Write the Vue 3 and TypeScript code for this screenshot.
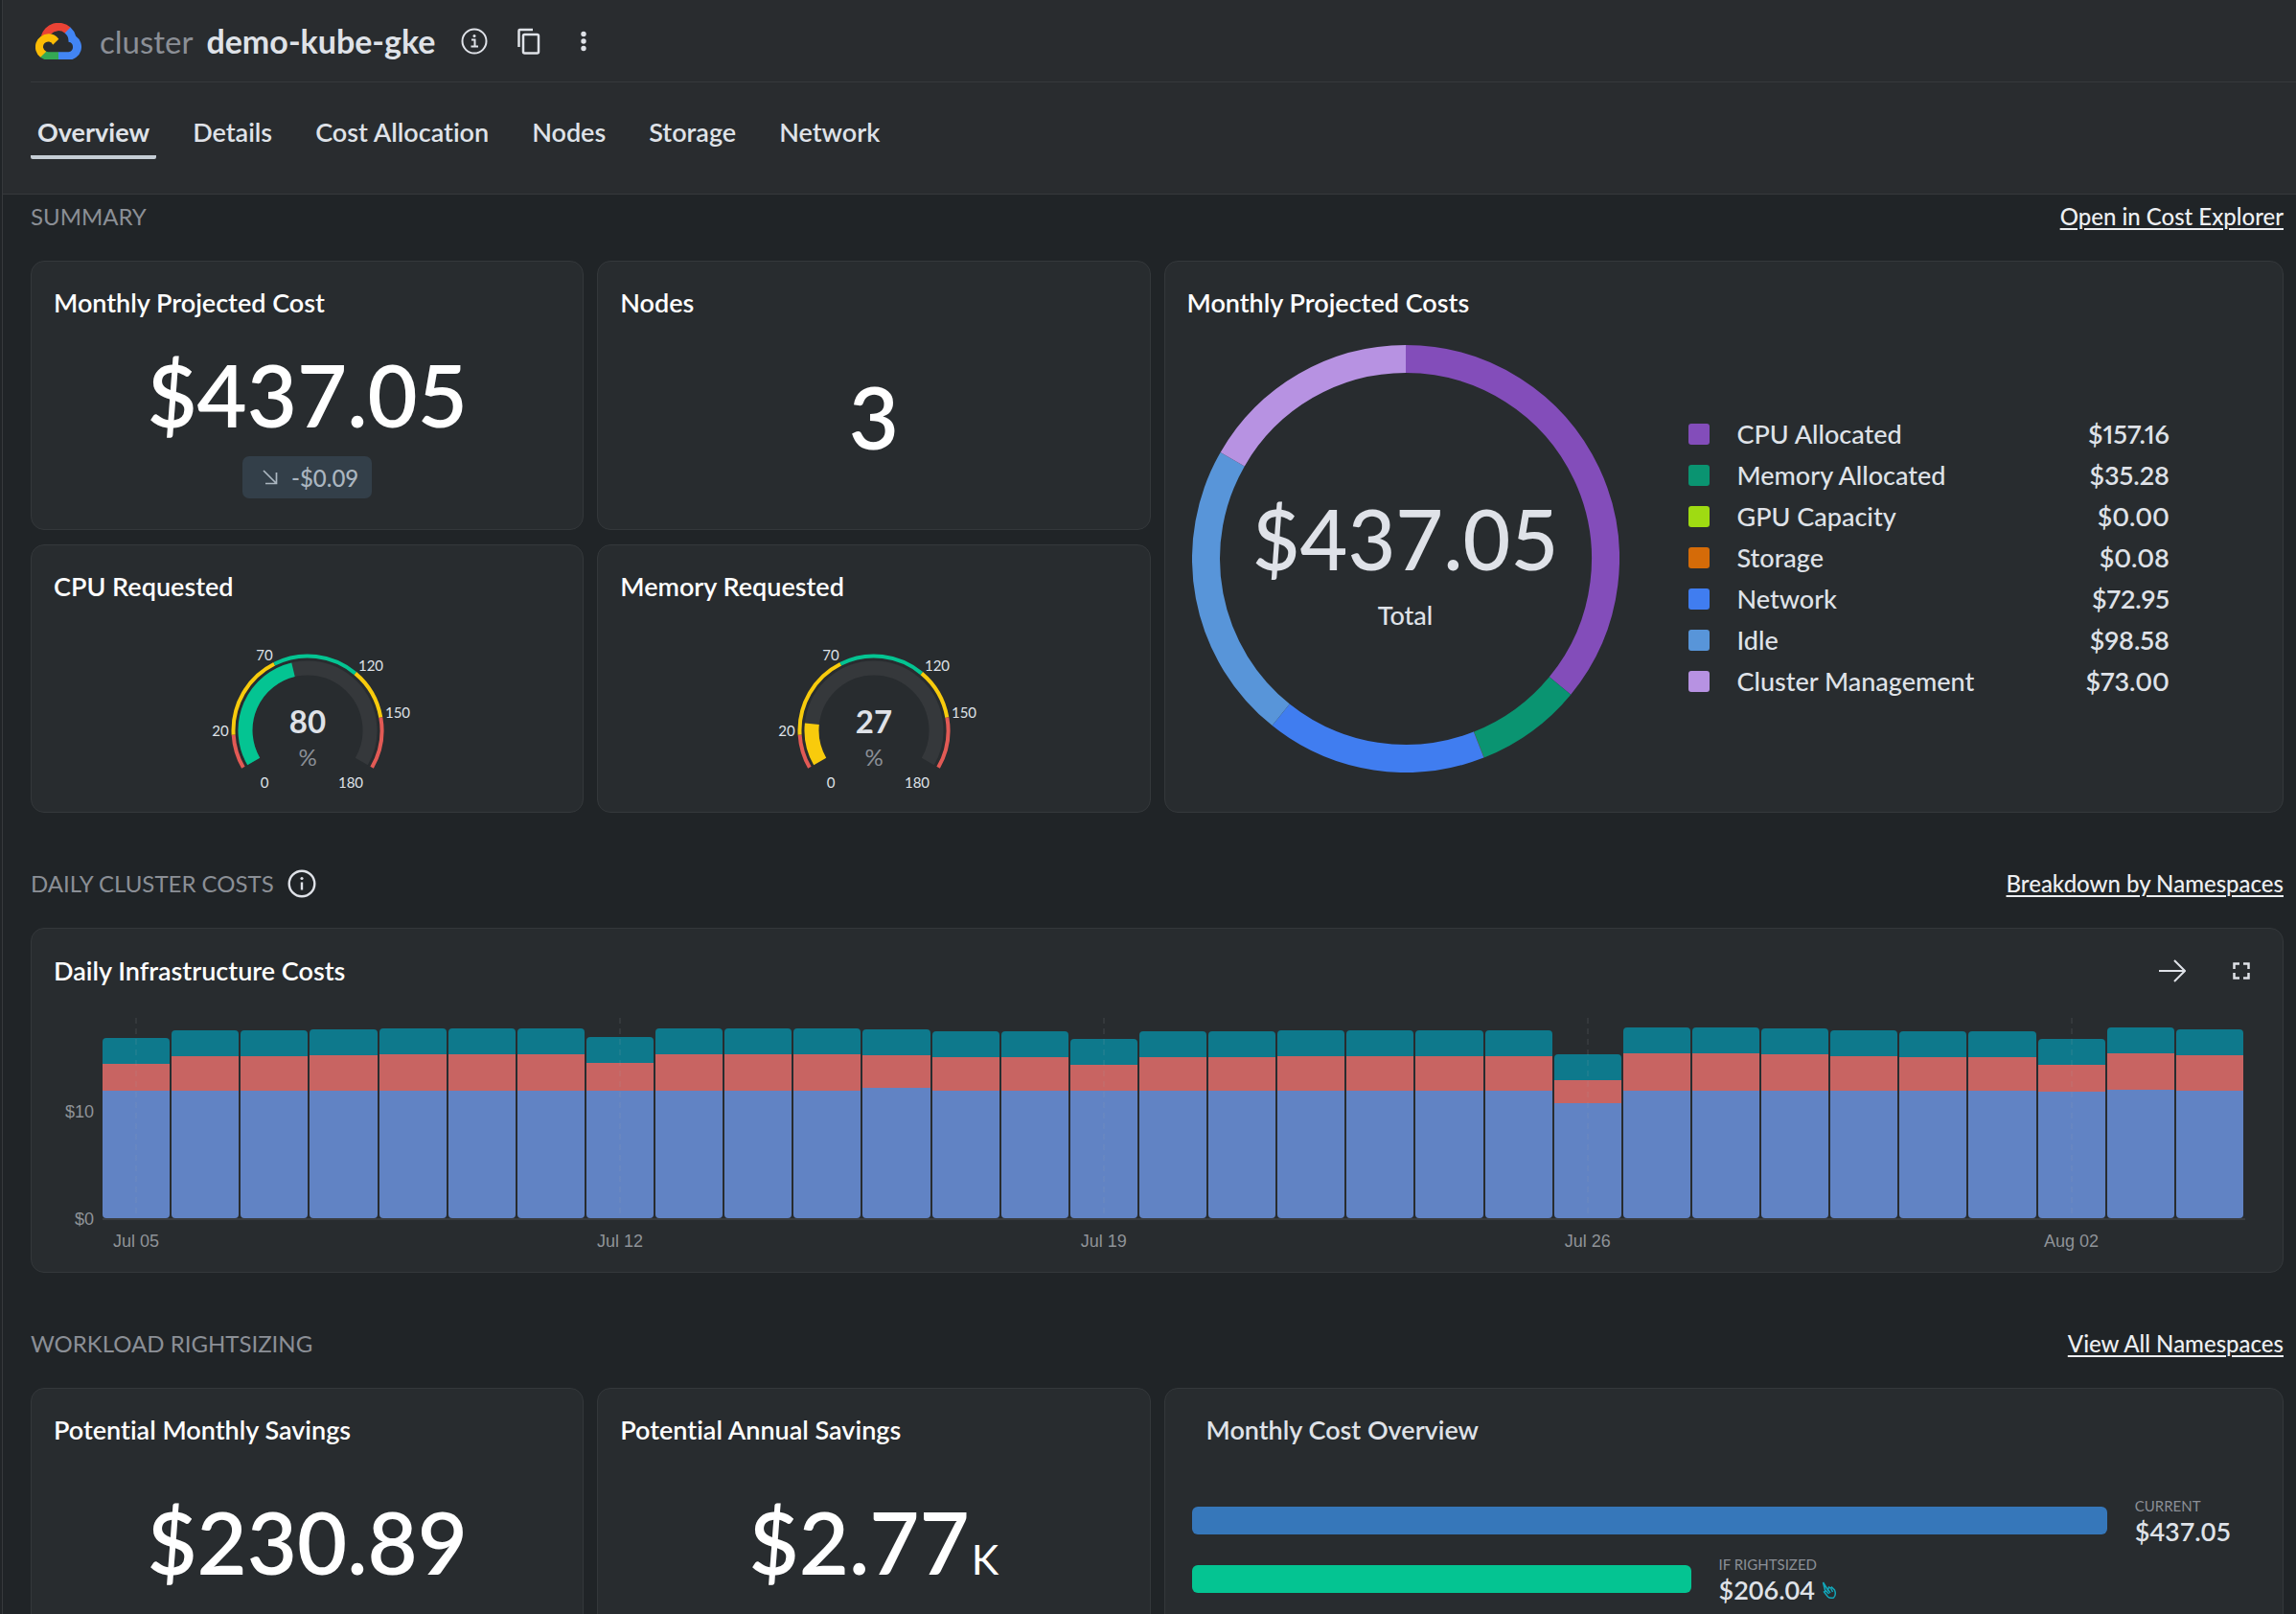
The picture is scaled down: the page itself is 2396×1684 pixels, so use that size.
<script setup lang="ts">
interface Slice {
  label: string
  value: number
  color: string
}

interface Day {
  base: number
  mid: number
  tick?: string
}

interface Gauge {
  title: string
  value: number
  color: string
}

const tabs = ['Overview', 'Details', 'Cost Allocation', 'Nodes', 'Storage', 'Network']

const slices: Slice[] = [
  { label: 'CPU Allocated', value: 157.16, color: '#834dba' },
  { label: 'Memory Allocated', value: 35.28, color: '#0a9471' },
  { label: 'GPU Capacity', value: 0, color: '#9fdb12' },
  { label: 'Storage', value: 0.08, color: '#d56b08' },
  { label: 'Network', value: 72.95, color: '#407df0' },
  { label: 'Idle', value: 98.58, color: '#5895d9' },
  { label: 'Cluster Management', value: 73, color: '#b792e2' },
]

const gauges: Gauge[] = [
  { title: 'CPU Requested', value: 80, color: '#04c492' },
  { title: 'Memory Requested', value: 27, color: '#f8cb0c' },
]

const bands = [
  { from: 0, to: 20, color: '#e25a55' },
  { from: 20, to: 70, color: '#f8cb0c' },
  { from: 70, to: 120, color: '#04c492' },
  { from: 120, to: 150, color: '#f8cb0c' },
  { from: 150, to: 180, color: '#e25a55' },
]

const gaugeLabels = [
  { text: '0', x: 65, y: 159 },
  { text: '20', x: 19, y: 105 },
  { text: '70', x: 65, y: 26 },
  { text: '120', x: 176, y: 37 },
  { text: '150', x: 204, y: 86 },
  { text: '180', x: 155, y: 159 },
]

// Segment heights of the stacked columns; the top segment is the same every day.
const TOP = 27
const days: Day[] = [
  { base: 133, mid: 28, tick: 'Jul 05' },
  { base: 133, mid: 36 },
  { base: 133, mid: 36 },
  { base: 133, mid: 37 },
  { base: 133, mid: 38 },
  { base: 133, mid: 38 },
  { base: 133, mid: 38 },
  { base: 133, mid: 29, tick: 'Jul 12' },
  { base: 133, mid: 38 },
  { base: 133, mid: 38 },
  { base: 133, mid: 38 },
  { base: 136, mid: 34 },
  { base: 133, mid: 35 },
  { base: 133, mid: 35 },
  { base: 133, mid: 27, tick: 'Jul 19' },
  { base: 133, mid: 35 },
  { base: 133, mid: 35 },
  { base: 133, mid: 36 },
  { base: 133, mid: 36 },
  { base: 133, mid: 36 },
  { base: 133, mid: 36 },
  { base: 120, mid: 24, tick: 'Jul 26' },
  { base: 133, mid: 39 },
  { base: 133, mid: 39 },
  { base: 133, mid: 38 },
  { base: 133, mid: 36 },
  { base: 133, mid: 35 },
  { base: 133, mid: 35 },
  { base: 132, mid: 28, tick: 'Aug 02' },
  { base: 134, mid: 38 },
  { base: 133, mid: 37 },
]

// Point on a circle, with the angle in degrees clockwise from the top.
function point(cx: number, cy: number, r: number, deg: number): string {
  const a = ((deg - 90) * Math.PI) / 180
  return `${(cx + r * Math.cos(a)).toFixed(2)} ${(cy + r * Math.sin(a)).toFixed(2)}`
}

function arc(cx: number, cy: number, r: number, a0: number, a1: number): string {
  const large = a1 - a0 > 180 ? 1 : 0
  return `M${point(cx, cy, r, a0)} A${r} ${r} 0 ${large} 1 ${point(cx, cy, r, a1)}`
}

const total = slices.reduce((sum, s) => sum + s.value, 0)

let turned = 0
const donut = slices
  .filter((s) => s.value > 0)
  .map((s) => {
    const start = turned
    turned += (s.value / total) * 360
    return { color: s.color, d: arc(223, 223, 208.5, start, turned) }
  })

function gaugeArc(r: number, from: number, to: number): string {
  return arc(110, 99, r, -120 + (from / 180) * 240, -120 + (to / 180) * 240)
}

function money(n: number): string {
  return `$${n.toFixed(2)}`
}
</script>

<template>
  <div class="page">
    <div class="content">
      <header class="top">
        <div class="identity">
          <svg class="logo" viewBox="0 0 48 38" aria-hidden="true">
            <path fill="#ea4335" d="M30.600 10.500h1.500l4.200-4.200.2-1.800A19 19 0 0 0 5.700 13.700c.5-.2 1-.2 1.500-.1l8.400-1.400s.4-.7.6-.7a10.500 10.500 0 0 1 14.400-1z" />
            <path fill="#4285f4" d="M42.200 13.700a18.900 18.900 0 0 0-5.700-9.200l-5.900 5.900a10.500 10.500 0 0 1 3.900 8.300v1a5.300 5.300 0 0 1 0 10.500H24l-1 1.100v6.300l1 1h10.500a13.700 13.700 0 0 0 7.700-24.900z" />
            <path fill="#34a853" d="M13.500 38.600H24v-8.400H13.500c-.8 0-1.500-.2-2.200-.5l-1.500.5-4.200 4.200-.4 1.400a13.600 13.600 0 0 0 8.300 2.800z" />
            <path fill="#fbbc05" d="M13.500 11.300a13.700 13.700 0 0 0-8.300 24.500l6.100-6.100a5.300 5.300 0 1 1 6.900-6.900l6.100-6.100a13.600 13.600 0 0 0-10.800-5.400z" />
          </svg>
          <span class="kind">cluster</span>
          <h1>demo-kube-gke</h1>
          <button class="icon-btn" aria-label="Cluster information">
            <svg width="28" height="28" viewBox="0 0 28 28" fill="none" stroke="currentColor" stroke-width="2">
              <circle cx="14" cy="14" r="12.500" />
              <path d="M11 12.500h3.500v7M10.500 19.500h7.500" />
              <circle cx="14" cy="8.500" r="1.500" fill="currentColor" stroke="none" />
            </svg>
          </button>
          <button class="icon-btn" aria-label="Copy name">
            <svg width="28" height="28" viewBox="0 0 28 28" fill="none" stroke="currentColor" stroke-width="2.500">
              <path d="M3.500 20V3q0-1 1-1H18" />
              <rect x="8" y="7" width="16" height="19.500" rx="1.500" />
            </svg>
          </button>
          <button class="icon-btn" aria-label="More actions">
            <svg width="28" height="28" viewBox="0 0 28 28" fill="currentColor">
              <circle cx="14" cy="6.500" r="2.700" />
              <circle cx="14" cy="14" r="2.700" />
              <circle cx="14" cy="21.500" r="2.700" />
            </svg>
          </button>
        </div>
        <nav class="tabs">
          <a v-for="(tab, i) in tabs" :key="tab" href="#" class="tab" :class="{ active: i === 0 }">{{ tab }}</a>
        </nav>
      </header>

      <main>
        <section>
          <div class="section-head">
            <h2>SUMMARY</h2>
            <a href="#">Open in Cost Explorer</a>
          </div>
          <div class="grid summary">
            <article class="card">
              <h3>Monthly Projected Cost</h3>
              <div class="stat">
                <p class="big">$437.05</p>
                <p class="badge">
                  <svg width="16" height="16" viewBox="0 0 16 16" fill="none" stroke="currentColor" stroke-width="1.700">
                    <path d="M1 1l13 13M14.500 3v11.500H3" />
                  </svg>
                  <span>-$0.09</span>
                </p>
              </div>
            </article>
            <article class="card">
              <h3>Nodes</h3>
              <div class="stat"><p class="big tall">3</p></div>
            </article>

            <article class="card wide">
              <h3>Monthly Projected Costs</h3>
              <div class="breakdown">
                <div class="donut">
                  <svg viewBox="0 0 446 446" fill="none" stroke-width="29" aria-hidden="true">
                    <path v-for="seg in donut" :key="seg.color" :d="seg.d" :stroke="seg.color" />
                  </svg>
                  <div class="donut-text">
                    <p class="donut-value">$437.05</p>
                    <p class="donut-label">Total</p>
                  </div>
                </div>
                <table class="legend">
                  <tbody>
                    <tr v-for="s in slices" :key="s.label">
                      <td class="swatch-cell"><span class="swatch" :style="{ background: s.color }"></span></td>
                      <th scope="row">{{ s.label }}</th>
                      <td class="amount">{{ money(s.value) }}</td>
                    </tr>
                  </tbody>
                </table>
              </div>
            </article>

            <article v-for="g in gauges" :key="g.title" class="card">
              <h3>{{ g.title }}</h3>
              <div class="gauge-wrap">
                <svg class="gauge" width="220" height="170" viewBox="0 0 220 170" fill="none">
                  <path v-for="b in bands" :key="b.from" :d="gaugeArc(77.5, b.from, b.to)" :stroke="b.color" stroke-width="4" />
                  <path :d="gaugeArc(65, 0, 180)" stroke="#35383b" stroke-width="15" />
                  <path :d="gaugeArc(65, 0, g.value)" :stroke="g.color" stroke-width="15" />
                  <text v-for="l in gaugeLabels" :key="l.text" :x="l.x" :y="l.y" class="gauge-tick">{{ l.text }}</text>
                  <text x="110" y="102" class="gauge-value">{{ g.value }}</text>
                  <text x="110" y="136" class="gauge-unit">%</text>
                </svg>
              </div>
            </article>
          </div>
        </section>

        <section>
          <div class="section-head">
            <h2>DAILY CLUSTER COSTS</h2>
            <button class="icon-btn tight" aria-label="About daily cluster costs">
              <svg width="30" height="30" viewBox="0 0 30 30" fill="none" stroke="currentColor" stroke-width="2.400">
                <circle cx="15" cy="15" r="13.300" />
                <path d="M15 13.500v8" />
                <circle cx="15" cy="9.500" r="1.600" fill="currentColor" stroke="none" />
              </svg>
            </button>
            <a href="#">Breakdown by Namespaces</a>
          </div>
          <article class="card chart-card">
            <div class="chart-head">
              <h3>Daily Infrastructure Costs</h3>
              <button class="icon-btn" aria-label="Open report">
                <svg width="28" height="28" viewBox="0 0 28 28" fill="none" stroke="currentColor" stroke-width="2">
                  <path d="M0 14h27M16 3l11 11-11 11" />
                </svg>
              </button>
              <button class="icon-btn" aria-label="Full screen">
                <svg width="28" height="28" viewBox="0 0 28 28" fill="none" stroke="currentColor" stroke-width="2.500">
                  <path d="M6.500 12V6.500H12M16 6.500h5.500V12M21.500 16v5.500H16M12 21.500H6.500V16" />
                </svg>
              </button>
            </div>
            <div class="chart">
              <div class="y-axis"><span>$10</span><span>$0</span></div>
              <div class="bars">
                <div v-for="(d, i) in days" :key="i" class="day" :class="{ marked: d.tick }">
                  <div class="seg upper" :style="{ height: TOP + 'px' }"></div>
                  <div class="seg middle" :style="{ height: d.mid + 'px' }"></div>
                  <div class="seg lower" :style="{ height: d.base + 'px' }"></div>
                  <span v-if="d.tick" class="tick">{{ d.tick }}</span>
                </div>
              </div>
            </div>
          </article>
        </section>

        <section>
          <div class="section-head">
            <h2>WORKLOAD RIGHTSIZING</h2>
            <a href="#">View All Namespaces</a>
          </div>
          <div class="grid savings">
            <article class="card">
              <h3>Potential Monthly Savings</h3>
              <div class="stat"><p class="big">$230.89</p></div>
            </article>
            <article class="card">
              <h3>Potential Annual Savings</h3>
              <div class="stat"><p class="big">$2.77<small>K</small></p></div>
            </article>
            <article class="card wide">
              <h3 class="muted">Monthly Cost Overview</h3>
              <div class="compare">
                <div class="compare-row">
                  <div class="meter current"></div>
                  <div class="meter-text">
                    <span class="caption">CURRENT</span>
                    <span class="sum">$437.05</span>
                  </div>
                </div>
                <div class="compare-row">
                  <div class="meter rightsized"></div>
                  <div class="meter-text">
                    <span class="caption">IF RIGHTSIZED</span>
                    <span class="sum">$206.04
                      <svg width="16" height="20" viewBox="0 0 16 20" fill="none" stroke="#12a5b8" stroke-width="1.500">
                        <path d="M4 12L1.500 2l5 8 1-3 2 1 1-1 3 3q2 5-1 8-4 1-6-1l-4-5 2-1 3 3M7 10l2 3M9.500 8l2 4" />
                      </svg>
                    </span>
                  </div>
                </div>
              </div>
            </article>
          </div>
        </section>
      </main>
    </div>
  </div>
</template>

<style>
body {
  margin: 0;
  background: #202427;
}
</style>

<style scoped>
* {
  box-sizing: border-box;
}

.page {
  height: 100vh;
  overflow: hidden;
  padding-left: 2px;
  background: #202427;
  color: #dfe2e8;
  font-family: Lato, "Liberation Sans", sans-serif;
  font-size: 27px;
  font-variant-ligatures: none;
}

.content {
  border-left: 1px solid #36393c;
}

h1,
h2,
h3,
p {
  margin: 0;
  font-weight: 500;
}

button {
  padding: 0;
  border: 0;
  background: none;
  color: inherit;
  font: inherit;
  cursor: pointer;
}

button svg {
  display: block;
}

.top {
  padding-left: 29px;
  background: #292c2f;
  border-bottom: 1px solid #36393c;
}

.identity {
  display: flex;
  align-items: center;
  height: 86px;
  padding-left: 5px;
  border-bottom: 1px solid #36393c;
}

.logo {
  width: 48px;
  height: 38px;
  margin-right: 19px;
}

.kind {
  margin-right: 14px;
  color: #8b8f96;
  font-size: 33px;
  line-height: 40px;
}

h1 {
  margin-right: -2px;
  font-size: 34px;
  font-weight: 700;
  line-height: 40px;
}

.icon-btn {
  margin-left: 29px;
}

.icon-btn.tight {
  margin-left: 14px;
}

.tabs {
  display: flex;
  gap: 31px;
  height: 116px;
  padding-top: 32px;
}

.tab {
  height: 48px;
  padding: 0 7px;
  border-bottom: 4px solid transparent;
  color: inherit;
  font-weight: 600;
  line-height: 40px;
  text-decoration: none;
}

.tab.active {
  border-color: #c5cdd5;
  border-radius: 2px;
  font-weight: 700;
}

main {
  display: flex;
  flex-direction: column;
  gap: 58px;
  padding: 7px 13px 0 29px;
}

.section-head {
  display: flex;
  align-items: center;
  height: 32px;
  margin-bottom: 30px;
}

h2 {
  color: #8b8f96;
  font-size: 24px;
  font-weight: 400;
  line-height: 32px;
}

.section-head a {
  margin-left: auto;
  color: #edeff2;
  font-size: 24px;
  font-weight: 500;
  line-height: 32px;
  text-decoration-thickness: 2px;
  text-underline-offset: 3px;
}

.grid {
  display: grid;
  grid-template-columns: repeat(4, 1fr);
  gap: 15px 14px;
}

.summary {
  grid-template-rows: 281px 280px;
}

.card {
  display: flex;
  flex-direction: column;
  border: 1px solid #34383b;
  border-radius: 14px;
  background: #282c2f;
}

.wide {
  grid-row: span 2;
  grid-column: span 2;
}

h3 {
  padding: 23px 23px 0;
  color: #fff;
  font-size: 27px;
  font-weight: 600;
  line-height: 40px;
}

.stat {
  display: flex;
  flex: 1;
  flex-direction: column;
  align-items: center;
  padding-top: 23px;
}

.big {
  color: #fff;
  font-size: 90px;
  font-weight: 600;
  line-height: 104px;
}

.tall {
  line-height: 150px;
}

.big small {
  margin-left: 2px;
  font-size: 43px;
  font-weight: 400;
}

.badge {
  display: flex;
  gap: 14px;
  align-items: center;
  height: 44px;
  margin-top: 13px;
  padding: 0 14px 0 21px;
  border-radius: 7px;
  background: #333f49;
  color: #abb6c0;
  font-size: 24px;
}

.breakdown {
  display: flex;
  padding: 24px 118px 0 28px;
}

.donut {
  position: relative;
  width: 446px;
  height: 446px;
}

.donut svg {
  display: block;
}

.donut-text {
  position: absolute;
  inset: 0;
  display: flex;
  flex-direction: column;
  align-items: center;
  justify-content: center;
  padding-top: 14px;
}

.donut-value {
  font-size: 86px;
  line-height: 104px;
}

.donut-label {
  line-height: 56px;
}

.legend {
  flex: 1;
  align-self: center;
  margin-left: 72px;
  border-collapse: collapse;
}

.legend tr {
  height: 43px;
}

.legend td,
.legend th {
  padding: 0 0 4px;
  font-weight: 500;
  text-align: left;
}

.legend .swatch-cell {
  width: 51px;
  padding-bottom: 2px;
}

.swatch {
  display: block;
  width: 22px;
  height: 22px;
  border-radius: 3px;
}

.legend .amount {
  font-variant-numeric: proportional-nums;
  font-weight: 600;
  text-align: right;
}

.gauge-wrap {
  display: flex;
  flex: 1;
  align-items: flex-start;
  justify-content: center;
  padding-top: 31px;
}

.gauge text {
  text-anchor: middle;
}

.gauge-tick {
  fill: #dfe2e8;
  font-size: 15px;
}

.gauge-value {
  fill: #dfe2e8;
  font-size: 33px;
  font-weight: 700;
}

.gauge-unit {
  fill: #8b8f96;
  font-size: 24px;
}

.chart-card {
  height: 360px;
}

.chart-head {
  display: flex;
  align-items: center;
  height: 88px;
  padding-right: 29px;
}

.chart-head h3 {
  margin-right: auto;
  padding-top: 0;
}

.chart-head .icon-btn {
  margin-left: 44px;
}

.chart {
  display: flex;
  padding: 5px 39px 0 0;
  color: #8f9398;
  font-family: "Liberation Sans", Arial, sans-serif;
  font-size: 18px;
}

.y-axis {
  display: flex;
  flex-direction: column;
  gap: 92px;
  width: 74px;
  padding: 88px 9px 0 0;
  line-height: 20px;
  text-align: right;
}

.bars {
  display: flex;
  flex: 1;
  height: 211px;
  border-bottom: 2px solid #393c3f;
}

.day {
  position: relative;
  display: flex;
  flex: 1;
  flex-direction: column;
  justify-content: flex-end;
  padding-right: 2px;
}

.day.marked::before {
  content: "";
  position: absolute;
  inset: 0 auto 0 calc(50% - 2px);
  width: 2px;
  background: repeating-linear-gradient(rgba(160, 165, 170, 0.1) 0 6px, transparent 6px 11px);
}

.upper {
  border-radius: 4px 4px 0 0;
  background: #0e798c;
}

.middle {
  background: #c86462;
}

.lower {
  border-radius: 0 0 4px 4px;
  background: #6183c4;
}

.tick {
  position: absolute;
  top: 100%;
  left: calc(50% - 1px);
  margin-top: 14px;
  line-height: 20px;
  white-space: nowrap;
  transform: translateX(-50%);
}

.savings {
  grid-template-rows: 300px;
}

.savings .stat {
  padding-top: 44px;
}

.muted {
  padding-left: 43px;
  color: #dfe2e8;
}

.compare {
  display: flex;
  flex-direction: column;
  gap: 9px;
  padding: 48px 53px 0 28px;
}

.compare-row {
  display: flex;
  align-items: center;
  height: 52px;
}

.meter {
  flex: none;
  height: 29px;
  border-radius: 6px;
}

.current {
  width: 88%;
  background: #3677ba;
}

.rightsized {
  width: 48%;
  background: #04c492;
}

.meter-text {
  display: flex;
  flex-direction: column;
  margin-left: 29px;
  padding-top: 4px;
}

.caption {
  color: #8b8f96;
  font-size: 15px;
  line-height: 20px;
}

.sum {
  font-weight: 600;
  line-height: 34px;
  white-space: nowrap;
}
</style>
